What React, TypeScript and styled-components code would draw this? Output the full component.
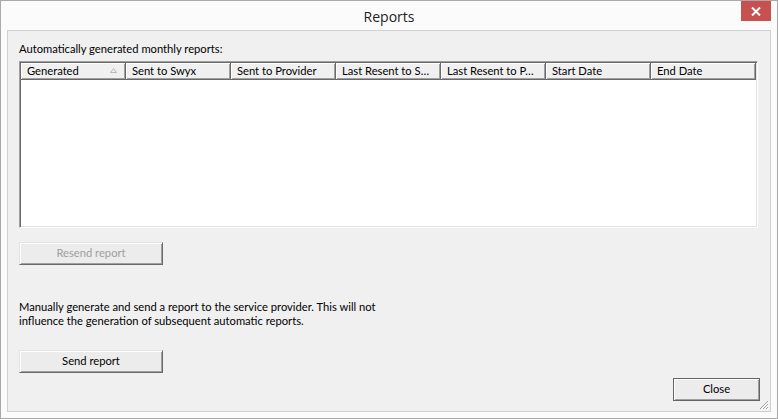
import styled, { createGlobalStyle } from 'styled-components';

const GlobalStyle = createGlobalStyle`
  html, body {
    margin: 0;
    padding: 0;
    background: #ffffff;
  }
  body {
    font-family: Lato, 'Noto Sans', sans-serif;
    font-size: 11.2px;
    color: #000000;
  }
`;

const COLUMNS = [
  'Generated',
  'Sent to Swyx',
  'Sent to Provider',
  'Last Resent to S…',
  'Last Resent to P…',
  'Start Date',
  'End Date',
];

const Window = styled.div`
  width: 778px;
  height: 419px;
  box-sizing: border-box;
  border: 1px solid #aaaaaa;
  background: #fbfbfb;
  display: flex;
  flex-direction: column;
`;

const TitleBar = styled.div`
  height: 29px;
  display: grid;
  grid-template-columns: 1fr auto 1fr;
  align-items: center;
`;

const Title = styled.div`
  grid-column: 2;
  font-family: 'Open Sans', 'Noto Sans', sans-serif;
  font-size: 14px;
  color: #222222;
  padding-top: 2px;
`;

const CloseButton = styled.div`
  grid-column: 3;
  justify-self: end;
  align-self: start;
  width: 30px;
  height: 20px;
  margin-right: 6px;
  background: #c75050;
  display: flex;
  align-items: center;
  justify-content: center;
`;

const Client = styled.div`
  position: relative;
  flex: 1;
  margin: 0 6px 6px 6px;
  border: 1px solid #d0d0d0;
  background: #f0f0f0;
  display: flex;
  flex-direction: column;
  padding: 10px 10px 10px 11px;
`;

const Label = styled.div`
  line-height: 15px;
  margin-bottom: 5px;
`;

const ListView = styled.div`
  width: 739px;
  height: 167px;
  box-sizing: border-box;
  border-style: solid;
  border-width: 1px;
  border-color: #a0a0a0 #ffffff #ffffff #a0a0a0;
  box-shadow: inset 1px 1px 0 #696969, inset -1px -1px 0 #e3e3e3;
  background: #ffffff;
  padding: 1px;
  display: flex;
  flex-direction: column;
`;

const HeaderRow = styled.div`
  display: flex;
  height: 17px;
  background: #f0f0f0;
`;

const HeaderCell = styled.div`
  position: relative;
  width: 105px;
  box-sizing: border-box;
  border-right: 1px solid #696969;
  border-bottom: 1px solid #696969;
  box-shadow: inset 1px 1px 0 #ffffff, inset -1px -1px 0 #a0a0a0;
  padding: 0 0 0 6px;
  line-height: 15px;
  white-space: nowrap;
  overflow: hidden;
`;

const HeaderFiller = styled.div`
  flex: 1;
  border-bottom: 1px solid #696969;
  box-shadow: inset 1px 1px 0 #ffffff, inset 0 -1px 0 #a0a0a0;
`;

const SortGlyph = styled.svg`
  position: absolute;
  right: 8px;
  top: 5px;
`;

const ListBody = styled.div`
  flex: 1;
`;

const Button = styled.div<{ $width: number; $disabled?: boolean; $default?: boolean }>`
  width: ${(p) => p.$width}px;
  height: 23px;
  box-sizing: border-box;
  display: flex;
  align-items: center;
  justify-content: center;
  background: #ececec;
  color: ${(p) => (p.$disabled ? '#a0a0a0' : '#000000')};
  border-style: solid;
  border-width: 1px;
  border-color: ${(p) =>
    p.$default ? '#646464' : '#e3e3e3 #696969 #696969 #e3e3e3'};
  box-shadow: inset 1px 1px 0 #ffffff, inset -1px -1px 0 #a0a0a0;
  padding-bottom: 2px;
`;

const ResendRow = styled.div`
  margin-top: 14px;
`;

const Notice = styled.div`
  margin-top: 35px;
  line-height: 14px;
`;

const SendRow = styled.div`
  margin-top: 22px;
`;

const Footer = styled.div`
  margin-top: auto;
  display: flex;
  justify-content: flex-end;
`;

const Grip = styled.svg`
  position: absolute;
  right: 1px;
  bottom: 1px;
`;

function App() {
  return (
    <>
      <GlobalStyle />
      <Window>
        <TitleBar>
          <Title>Reports</Title>
          <CloseButton>
            <svg width='10' height='9' viewBox='0 0 10 9'>
              <path d='M1 0.5 L9 8.5 M9 0.5 L1 8.5' stroke='#ffffff' strokeWidth='2' />
            </svg>
          </CloseButton>
        </TitleBar>
        <Client>
          <Label>Automatically generated monthly reports:</Label>
          <ListView>
            <HeaderRow>
              {COLUMNS.map((col, i) => (
                <HeaderCell key={col}>
                  {col}
                  {i === 0 && (
                    <SortGlyph width='7' height='5' viewBox='0 0 7 5'>
                      <path d='M0.5 4.5 L3.5 0.5 L6.5 4.5 Z' fill='none' stroke='#b8b8b8' strokeWidth='1' />
                    </SortGlyph>
                  )}
                </HeaderCell>
              ))}
              <HeaderFiller />
            </HeaderRow>
            <ListBody />
          </ListView>
          <ResendRow>
            <Button $width={144} $disabled>
              Resend report
            </Button>
          </ResendRow>
          <Notice>
            <div>Manually generate and send a report to the service provider. This will not</div>
            <div>influence the generation of subsequent automatic reports.</div>
          </Notice>
          <SendRow>
            <Button $width={144}>Send report</Button>
          </SendRow>
          <Footer>
            <Button $width={87} $default>
              Close
            </Button>
          </Footer>
          <Grip width='11' height='11' viewBox='0 0 11 11'>
            <path d='M10 2 L2 10 M10 5 L5 10 M10 8 L8 10' stroke='#a0a0a0' strokeWidth='1' />
            <path d='M11 3 L3 11 M11 6 L6 11 M11 9 L9 11' stroke='#ffffff' strokeWidth='1' />
          </Grip>
        </Client>
      </Window>
    </>
  );
}

export default App;
